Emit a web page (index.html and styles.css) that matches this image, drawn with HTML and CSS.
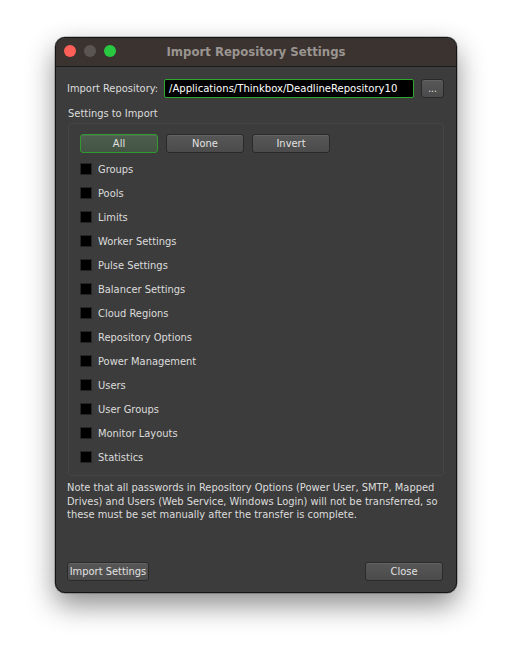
FILE: index.html
```html
<!DOCTYPE html>
<html>
<head>
<meta charset="utf-8">
<link rel="stylesheet" href="styles.css">
</head>
<body>
<div class="window">
  <div class="titlebar">
    <div class="lights">
      <span class="light red"></span>
      <span class="light grey"></span>
      <span class="light green"></span>
    </div>
    <div class="title">Import Repository Settings</div>
  </div>
  <div class="content">
    <div class="repo-row">
      <span class="label">Import Repository:</span>
      <div class="path-input">/Applications/Thinkbox/DeadlineRepository10</div>
      <button class="btn browse">...</button>
    </div>
    <div class="section-label">Settings to Import</div>
    <div class="group">
      <div class="btn-row">
        <button class="btn sel active">All</button>
        <button class="btn sel">None</button>
        <button class="btn sel">Invert</button>
      </div>
      <div class="checks">
        <label class="check"><span class="box"></span>Groups</label>
        <label class="check"><span class="box"></span>Pools</label>
        <label class="check"><span class="box"></span>Limits</label>
        <label class="check"><span class="box"></span>Worker Settings</label>
        <label class="check"><span class="box"></span>Pulse Settings</label>
        <label class="check"><span class="box"></span>Balancer Settings</label>
        <label class="check"><span class="box"></span>Cloud Regions</label>
        <label class="check"><span class="box"></span>Repository Options</label>
        <label class="check"><span class="box"></span>Power Management</label>
        <label class="check"><span class="box"></span>Users</label>
        <label class="check"><span class="box"></span>User Groups</label>
        <label class="check"><span class="box"></span>Monitor Layouts</label>
        <label class="check"><span class="box"></span>Statistics</label>
      </div>
    </div>
    <p class="note">Note that all passwords in Repository Options (Power User, SMTP, Mapped Drives) and Users (Web Service, Windows Login) will not be transferred, so these must be set manually after the transfer is complete.</p>
    <div class="footer">
      <button class="btn import">Import Settings</button>
      <button class="btn close">Close</button>
    </div>
  </div>
</div>
</body>
</html>
```
FILE: styles.css
```css
html, body {
  margin: 0;
  padding: 0;
  background: #ffffff;
}
body {
  width: 512px;
  height: 667px;
  overflow: hidden;
  font-family: "DejaVu Sans Condensed", "DejaVu Sans", sans-serif;
  font-size: 11px;
  color: #dcdcdc;
}
.window {
  margin: 37px 0 0 55px;
  width: 402px;
  height: 556px;
  box-sizing: border-box;
  border-radius: 10px;
  background: #3c3c3c;
  border: 1px solid #141414;
  box-shadow: 0 12px 28px rgba(0,0,0,0.45), 0 0 0 0.5px rgba(0,0,0,0.4);
  overflow: hidden;
  display: flex;
  flex-direction: column;
}
.titlebar {
  height: 28px;
  flex: none;
  background: #3a3330;
  border-bottom: 1px solid #1c1c1c;
  position: relative;
  display: flex;
  align-items: center;
  justify-content: center;
}
.lights {
  position: absolute;
  left: 8px;
  top: 7px;
  display: flex;
  gap: 8px;
}
.light {
  width: 12px;
  height: 12px;
  border-radius: 50%;
  display: block;
}
.red { background: #fe5f57; }
.grey { background: #5a5452; }
.green { background: #28c840; }
.title {
  font-weight: bold;
  font-size: 13px;
  color: #9a9590;
  margin-top: -1px;
}
.content {
  flex: 1;
  display: flex;
  flex-direction: column;
  padding: 12px 12px 11px 11px;
}
.repo-row {
  display: flex;
  align-items: center;
  height: 19px;
}
.label {
  width: 97px;
  white-space: nowrap;
}
.path-input {
  width: 250px;
  height: 19px;
  box-sizing: border-box;
  background: #000;
  border: 1px solid #2fa82f;
  border-radius: 2px;
  color: #ffffff;
  padding: 0 4px;
  line-height: 17px;
  font-size: 11.2px;
  white-space: nowrap;
  overflow: hidden;
}
.btn {
  font-family: inherit;
  font-size: 11px;
  color: #e2e2e2;
  background: linear-gradient(#575757, #4b4b4b);
  border: 1px solid #2a2a2a;
  border-radius: 3px;
  height: 19px;
  padding: 0;
  box-sizing: border-box;
  box-shadow: inset 0 1px 0 rgba(255,255,255,0.08);
  white-space: nowrap;
}
.browse {
  width: 23px;
  margin-left: 7px;
  font-size: 10px;
  line-height: 12px;
}
.section-label {
  margin-top: 8px;
  height: 16px;
  line-height: 16px;
  padding-left: 1px;
}
.group {
  margin: 1px 0 0 1px;
  width: 376px;
  height: 353px;
  box-sizing: border-box;
  border: 1px solid #454545;
  border-radius: 3px;
  padding: 10px 11px 0 11px;
}
.btn-row {
  display: flex;
  gap: 8px;
}
.sel { width: 78px; }
.active {
  background: linear-gradient(#4d5e4d, #445444);
  border: 1px solid #2f9a2f;
}
.checks {
  display: flex;
  flex-direction: column;
  margin-top: 4px;
}
.check {
  height: 24px;
  display: flex;
  align-items: center;
  gap: 6px;
}
.box {
  width: 12px;
  height: 12px;
  box-sizing: border-box;
  background: #000;
  border: 1px solid #262626;
  display: block;
}
.note {
  margin: 5px 0 0 0;
  line-height: 13.5px;
  width: 380px;
}
.footer {
  margin-top: auto;
  display: flex;
  justify-content: space-between;
  padding-right: 1px;
}
.import { width: 82px; }
.close { width: 78px; }
```
